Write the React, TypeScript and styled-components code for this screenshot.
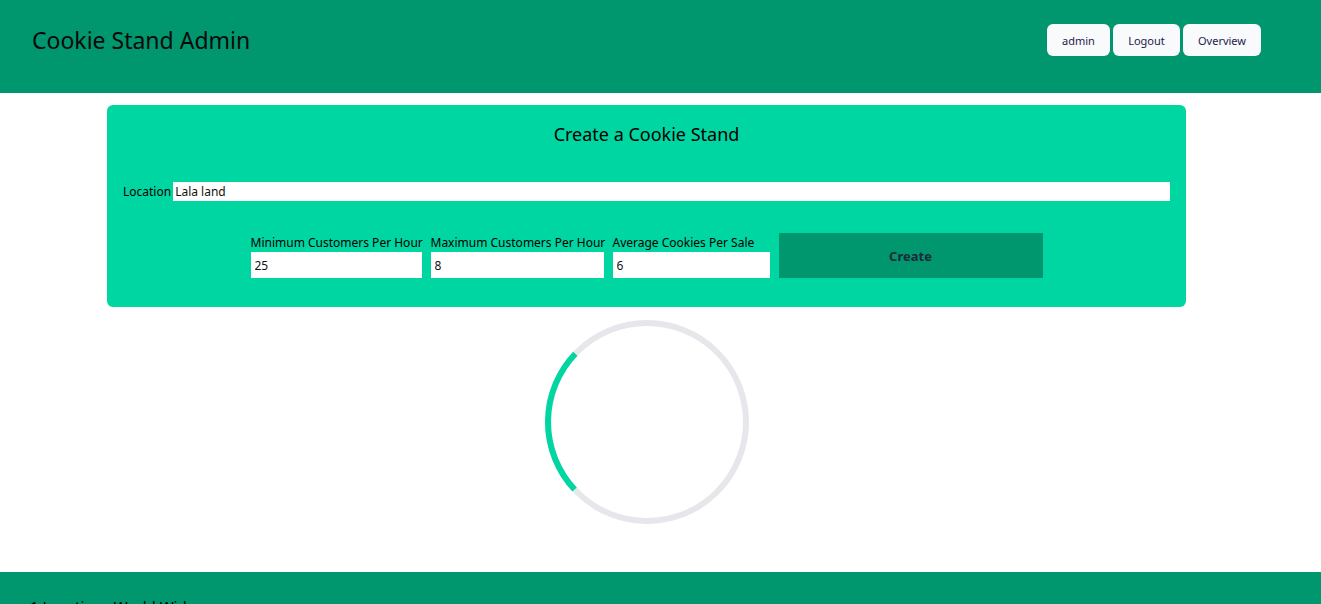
import styled, { createGlobalStyle } from 'styled-components';

const GlobalStyle = createGlobalStyle`
  body {
    margin: 0;
    font-family: "Noto Sans", "Open Sans", sans-serif;
    background: #ffffff;
    color: #000000;
  }
`;

const Header = styled.header`
  display: flex;
  align-items: center;
  justify-content: space-between;
  height: 93px;
  box-sizing: border-box;
  padding: 0 60px 13px 32px;
  background: #00966e;
`;

const Brand = styled.h1`
  margin: 0;
  font-size: 23px;
  font-weight: 400;
  color: #0a0a0a;
`;

const Nav = styled.nav`
  display: flex;
  gap: 3px;
`;

const NavButton = styled.button<{ $w: number }>`
  width: ${(p) => p.$w}px;
  height: 32px;
  border: none;
  border-radius: 6px;
  background: #f8fafc;
  color: #1e1b4b;
  font-family: inherit;
  font-size: 11px;
`;

const Main = styled.main`
  display: flex;
  flex-direction: column;
  padding: 12px 0 47px 107px;
`;

const Card = styled.form`
  width: 1079px;
  box-sizing: border-box;
  padding: 16px 16px 29px;
  border-radius: 6px;
  background: #00d6a1;
`;

const Title = styled.h2`
  margin: 0 0 35px;
  text-align: center;
  font-size: 18px;
  font-weight: 400;
  line-height: 26px;
`;

const LocationRow = styled.label`
  display: flex;
  align-items: center;
  font-size: 12px;
`;

const TextInput = styled.input`
  border: none;
  outline: none;
  padding: 0 2px;
  background: #ffffff;
  font-family: inherit;
  font-size: 12px;
  color: #111;
`;

const LocationInput = styled(TextInput)`
  flex: 1;
  height: 19px;
  margin-left: 2px;
`;

const FieldsRow = styled.div`
  display: flex;
  justify-content: center;
  align-items: flex-end;
  gap: 9px;
  margin-top: 32px;
`;

const Field = styled.label<{ $w: number }>`
  display: flex;
  flex-direction: column;
  width: ${(p) => p.$w}px;
  font-size: 12px;
  white-space: nowrap;
`;

const NumberInput = styled(TextInput)`
  height: 26px;
  margin-top: 1px;
  padding: 0 4px;
`;

const CreateButton = styled.button`
  width: 264px;
  height: 45px;
  border: none;
  background: #00966e;
  color: #1e293b;
  font-family: inherit;
  font-size: 13px;
  font-weight: 700;
`;

const SpinnerWrap = styled.div`
  display: flex;
  justify-content: center;
  width: 1079px;
  margin-top: 12px;
`;

const Footer = styled.footer`
  padding: 24px 30px 30px;
  background: #00966e;
  font-size: 15px;
`;

function Spinner() {
  const r = 99;
  const c = 2 * Math.PI * r;
  return (
    <svg width="206" height="206" viewBox="0 0 206 206">
      <circle cx="103" cy="103" r={r} fill="none" stroke="#e5e7eb" strokeWidth="6" />
      <circle
        cx="103"
        cy="103"
        r={r}
        fill="none"
        stroke="#00d6a1"
        strokeWidth="6"
        strokeDasharray={`${c * 0.24} ${c}`}
        transform="rotate(137 103 103)"
      />
    </svg>
  );
}

export default function App() {
  return (
    <>
      <GlobalStyle />
      <Header>
        <Brand>Cookie Stand Admin</Brand>
        <Nav>
          <NavButton $w={63}>admin</NavButton>
          <NavButton $w={67}>Logout</NavButton>
          <NavButton $w={78}>Overview</NavButton>
        </Nav>
      </Header>
      <Main>
        <Card onSubmit={(e) => e.preventDefault()}>
          <Title>Create a Cookie Stand</Title>
          <LocationRow>
            Location
            <LocationInput defaultValue="Lala land" />
          </LocationRow>
          <FieldsRow>
            <Field $w={171}>
              Minimum Customers Per Hour
              <NumberInput defaultValue="25" />
            </Field>
            <Field $w={173}>
              Maximum Customers Per Hour
              <NumberInput defaultValue="8" />
            </Field>
            <Field $w={157}>
              Average Cookies Per Sale
              <NumberInput defaultValue="6" />
            </Field>
            <CreateButton type="submit">Create</CreateButton>
          </FieldsRow>
        </Card>
        <SpinnerWrap>
          <Spinner />
        </SpinnerWrap>
      </Main>
      <Footer>1 Locations World Wide</Footer>
    </>
  );
}
